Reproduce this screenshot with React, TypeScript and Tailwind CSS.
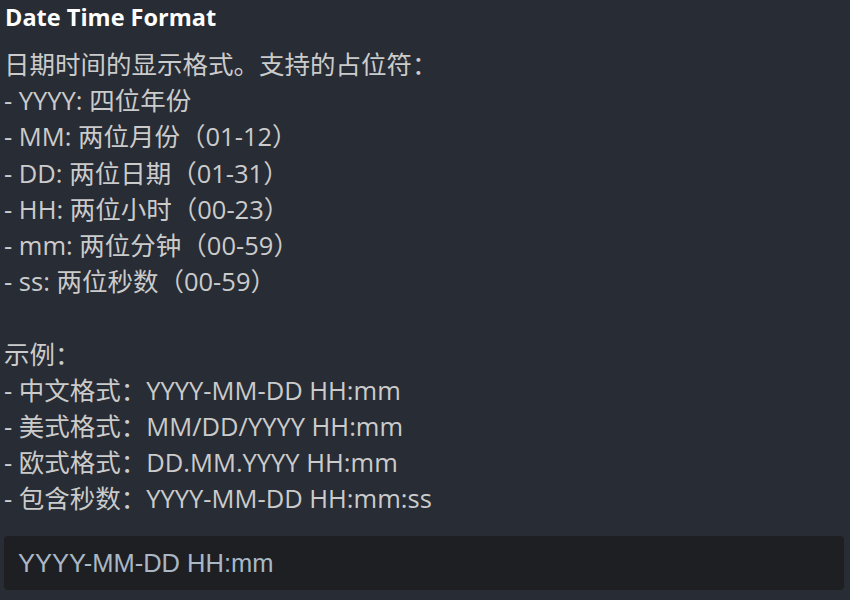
export default function App() {
  const lines = [
    '日期时间的显示格式。支持的占位符：',
    '- YYYY: 四位年份',
    '- MM: 两位月份（01-12）',
    '- DD: 两位日期（01-31）',
    '- HH: 两位小时（00-23）',
    '- mm: 两位分钟（00-59）',
    '- ss: 两位秒数（00-59）',
    '',
    '示例：',
    '- 中文格式：YYYY-MM-DD HH:mm',
    '- 美式格式：MM/DD/YYYY HH:mm',
    '- 欧式格式：DD.MM.YYYY HH:mm',
    '- 包含秒数：YYYY-MM-DD HH:mm:ss',
  ];

  return (
    <div
      className="w-[850px] h-[600px] bg-[#282c34] px-[4px] overflow-hidden"
      style={{ fontFamily: '"Open Sans", "Noto Sans CJK SC", sans-serif' }}
    >
      <h1 className="text-[23.5px] leading-[34px] font-bold text-white pl-[1px]">Date Time Format</h1>
      <div className="mt-[12px] text-[25.5px] leading-[36.2px] text-[#cbcbcb] whitespace-pre">
        {lines.map((l, i) => (
          <div key={i} className="h-[36.2px]">{l}</div>
        ))}
      </div>
      <input
        defaultValue="YYYY-MM-DD HH:mm"
        className="mt-[20px] w-[840px] h-[54px] rounded bg-[#1e1f22] px-[14px] text-[25.5px] text-[#a9b7c6] outline-none"
        style={{ fontFamily: '"Liberation Sans", sans-serif' }}
      />
    </div>
  );
}
